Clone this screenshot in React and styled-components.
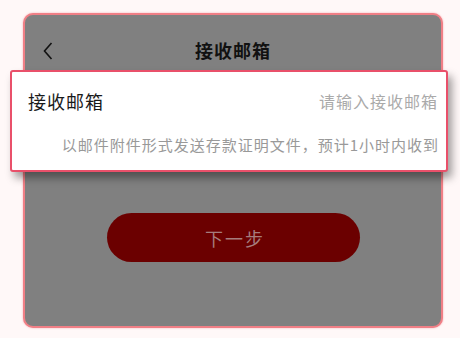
import React from 'react';
import styled, { createGlobalStyle } from 'styled-components';

const GlobalStyle = createGlobalStyle`
  html, body {
    margin: 0;
    padding: 0;
    background: #fff8f8;
    font-family: "Noto Sans CJK SC", "Noto Sans", sans-serif;
  }
`;

const Page = styled.div`
  position: relative;
  width: 460px;
  height: 338px;
  padding: 13px 0 0 23px;
  box-sizing: border-box;
`;

const Phone = styled.div`
  width: 420px;
  height: 315px;
  box-sizing: border-box;
  background: #808080;
  border: 2px solid #f07f86;
  border-radius: 10px;
  box-shadow: 0 0 2px rgba(240, 110, 120, 0.6);
  display: flex;
  flex-direction: column;
  align-items: center;
`;

const Header = styled.div`
  position: relative;
  width: 100%;
  height: 70px;
  display: flex;
  align-items: center;
  justify-content: center;
`;

const BackButton = styled.div`
  position: absolute;
  left: 17px;
  top: 26px;
  width: 12px;
  height: 20px;
  display: flex;
`;

const Title = styled.div`
  font-size: 18px;
  font-weight: 700;
  color: #111;
  letter-spacing: 1px;
`;

const NextButton = styled.button`
  margin-top: 128px;
  width: 253px;
  height: 49px;
  border: none;
  border-radius: 25px;
  background: #6b0000;
  color: #a67d7d;
  font-family: inherit;
  font-size: 18px;
  letter-spacing: 2px;
  padding: 0 0 0 4px;
`;

const Card = styled.div`
  position: absolute;
  left: 10px;
  top: 70px;
  width: 438px;
  height: 102px;
  box-sizing: border-box;
  background: #fff;
  border: 2px solid #e9506a;
  border-radius: 3px;
  box-shadow: 4px 6px 8px rgba(0, 0, 0, 0.38);
  padding: 0 8px 0 16px;
  display: flex;
  flex-direction: column;
`;

const FieldRow = styled.div`
  height: 58px;
  display: flex;
  align-items: center;
  justify-content: space-between;
`;

const FieldLabel = styled.div`
  font-size: 18px;
  color: #1a1a1a;
  letter-spacing: 1px;
`;

const Placeholder = styled.div`
  font-size: 16px;
  color: #aaa;
  letter-spacing: 1px;
`;

const Hint = styled.div`
  padding-top: 4px;
  text-align: right;
  font-size: 15px;
  color: #999;
  letter-spacing: 1px;
  margin-right: -1px;
`;

export default function App() {
  return (
    <>
      <GlobalStyle />
      <Page>
        <Phone>
          <Header>
            <BackButton>
              <svg width="12" height="20" viewBox="0 0 12 20">
                <path d="M9.5 2 L2.5 10 L9.5 18" fill="none" stroke="#111" strokeWidth="1.6" />
              </svg>
            </BackButton>
            <Title>接收邮箱</Title>
          </Header>
          <NextButton>下一步</NextButton>
        </Phone>
        <Card>
          <FieldRow>
            <FieldLabel>接收邮箱</FieldLabel>
            <Placeholder>请输入接收邮箱</Placeholder>
          </FieldRow>
          <Hint>以邮件附件形式发送存款证明文件，预计1小时内收到</Hint>
        </Card>
      </Page>
    </>
  );
}
